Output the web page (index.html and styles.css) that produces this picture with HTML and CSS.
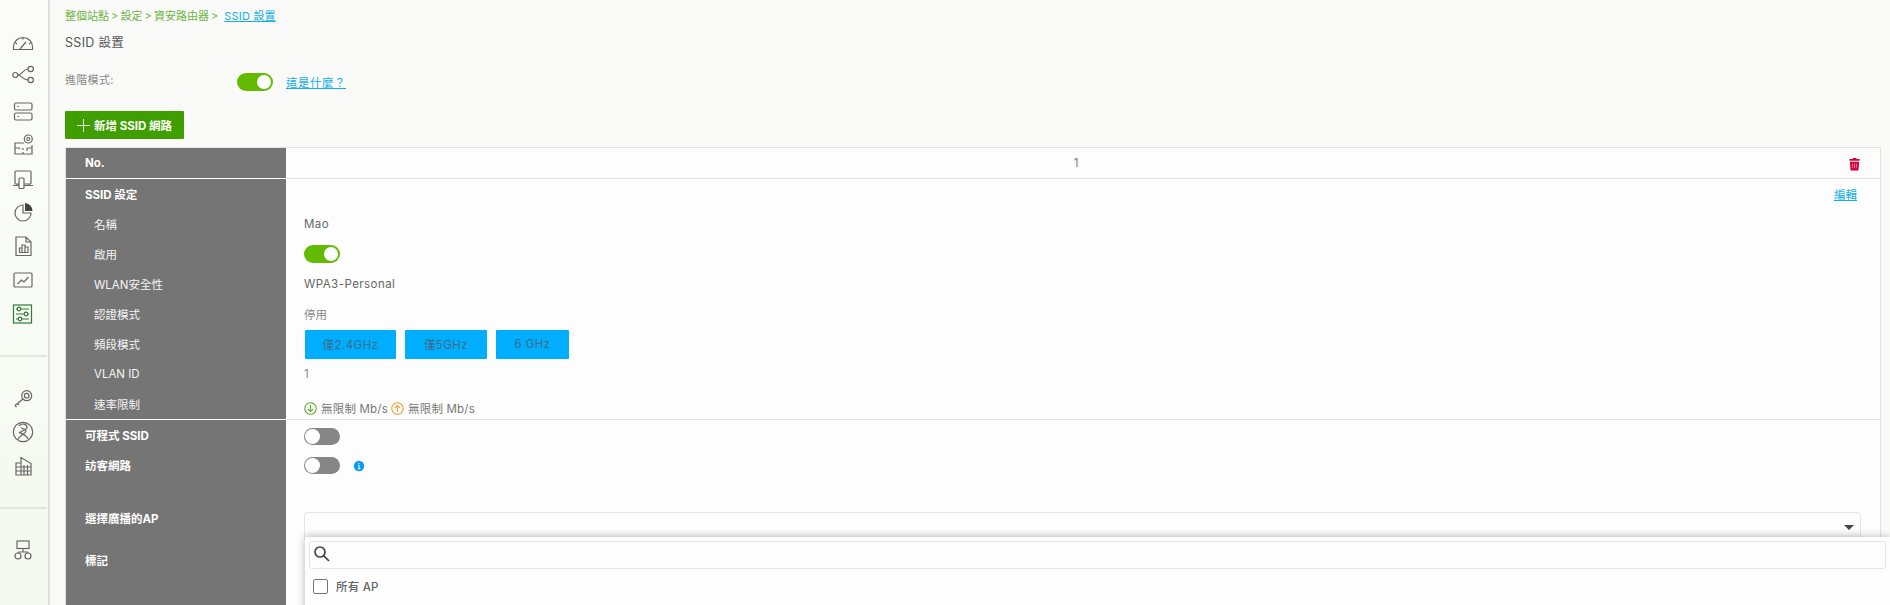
FILE: index.html
```html
<!DOCTYPE html>
<html lang="zh-Hant">
<head>
<meta charset="utf-8">
<title>SSID 設置</title>
<link rel="stylesheet" href="styles.css">
</head>
<body>
<div class="app">
  <nav class="sidebar">
    <svg class="ic" viewBox="0 0 28 28"><path d="M4.500 18.500V16a9.500 9.500 0 0 1 19 0v2.500zM11 18l6-7M14 6.500v2M6.500 12l1.500 1M21.500 12l-1.500 1"/></svg>
    <svg class="ic m2" viewBox="0 0 28 28"><circle cx="6.300" cy="14" r="2.500"/><circle cx="21.700" cy="8" r="2.700"/><circle cx="21.700" cy="19" r="2.700"/><path d="M8.800 14c4 0 4.500-5 10.200-6M8.800 14c4 0 4.500 4.500 10.200 5"/></svg>
    <svg class="ic m9" viewBox="0 0 28 28"><rect x="5.500" y="5" width="17.500" height="7" rx="1.500"/><rect x="5.500" y="15" width="17.500" height="7" rx="1.500"/><path d="M8.500 8.500h1.500M8.500 18.500h1.500"/></svg>
    <svg class="ic m7" viewBox="0 0 28 28"><path d="M15 10H6v11h17V12M6 15h4l1 1M14 15v2M18 15h5M14 19v2M18 15v3"/><circle cx="19.300" cy="6" r="4"/><circle cx="19.300" cy="6" r="1.500"/></svg>
    <svg class="ic m5" viewBox="0 0 28 28"><rect x="6" y="5" width="16" height="13" rx="1"/><path d="M4 19.500h6M15 19.500h9M8 18v1.500M20 18v1.500"/><rect x="10" y="12" width="5" height="10.500" rx="1" class="wash"/></svg>
    <svg class="ic m4" viewBox="0 0 28 28"><path d="M14 7a8 8 0 1 0 8 8h-8z"/><path class="solid" d="M16 5a8 8 0 0 1 7.500 8H16z"/></svg>
    <svg class="ic m6" viewBox="0 0 28 28"><path d="M7 5h10l5 5v13.500H7zM17 5v5h5M10.500 20v-4h2.500v4M13 20v-7h3v7M16 20v-5h3v5M10 20.500h9.500"/></svg>
    <svg class="ic m6" viewBox="0 0 28 28"><rect x="5" y="7" width="18" height="14" rx="1"/><path d="M8.500 18l4-4 2.500 2 4.500-5"/></svg>
    <svg class="ic m6 active" viewBox="0 0 28 28"><rect x="4.500" y="5" width="18" height="18"/><path d="M7 9h13M7 14h13M7 19h13"/><circle cx="10" cy="9" r="1.800" class="fillbg"/><circle cx="17" cy="14" r="1.800" class="fillbg"/><circle cx="11" cy="19" r="1.800" class="fillbg"/></svg>
    <hr class="rule">
    <svg class="ic" viewBox="0 0 28 28"><circle cx="17.700" cy="11.700" r="5"/><circle cx="17.700" cy="11.700" r="2.300"/><path d="M14 15l-8 6.500M8.500 19.500l1.500 1.500M6 21.500l1.500 1.500"/></svg>
    <svg class="ic m6" viewBox="0 0 28 28"><circle cx="14" cy="14" r="9.700"/><path d="M9 21.500c1-4 8-6 8-8.500 0-2-3.500-1.500-5-3.500M10 8c3-3.500 8-2 8 1.500 0 2-4 3-6.500 4.500M10 14c2 2 8 3 9 7"/></svg>
    <svg class="ic m7" viewBox="0 0 28 28"><path d="M12 10H7v12h15V10.500L12 4.500zM12 22V10M7 14h15M7 18h15M15 12v10M18.500 12v10"/></svg>
    <hr class="rule rule-low">
    <svg class="ic" viewBox="0 0 28 28"><rect x="8" y="5" width="12" height="7.500"/><path d="M14 12.500v3.500M9.500 17v-1h9v1"/><circle cx="9" cy="20" r="3"/><circle cx="19" cy="20" r="3"/></svg>
  </nav>

  <main class="main">
    <div class="crumbs">整個站點 &gt; 設定 &gt; 資安路由器 &gt;<a class="crumb-link" href="#">SSID 設置</a></div>
    <h1 class="title">SSID 設置</h1>
    <div class="mode">
      <span class="mode-label">進階模式:</span>
      <span class="toggle on"></span>
      <a class="link mode-link" href="#">這是什麼？</a>
    </div>
    <button class="add-btn"><span class="plus"></span>新增 SSID 網路</button>

    <section class="table">
      <div class="row row-no">
        <div class="lab strong">No.</div>
        <div class="val no-val"><span class="no-num">1</span>
          <svg class="trash" viewBox="0 0 14 14"><path d="M5 1.500V.5h4v1h3.500v2h-11v-2zM2 4.500h10L11.200 14H2.800z"/><path class="slots" d="M5 6.500v5M7 6.500v5M9 6.500v5"/></svg>
        </div>
      </div>
      <div class="row row-first">
        <div class="lab strong">SSID 設定</div>
        <div class="val val-end"><a class="link" href="#">編輯</a></div>
      </div>
      <div class="row"><div class="lab sub">名稱</div><div class="val wide">Mao</div></div>
      <div class="row"><div class="lab sub">啟用</div><div class="val"><span class="toggle on"></span></div></div>
      <div class="row"><div class="lab sub">WLAN安全性</div><div class="val wide">WPA3-Personal</div></div>
      <div class="row"><div class="lab sub">認證模式</div><div class="val muted">停用</div></div>
      <div class="row"><div class="lab sub">頻段模式</div>
        <div class="val bands wide">
          <span class="band b24">僅2.4GHz</span><span class="band b5">僅5GHz</span><span class="band b6">6 GHz</span>
        </div>
      </div>
      <div class="row"><div class="lab sub">VLAN ID</div><div class="val muted">1</div></div>
      <div class="row row-last"><div class="lab sub">速率限制</div>
        <div class="val rate">
          <svg class="arrow down" viewBox="0 0 12 12"><circle cx="6" cy="6" r="5.300"/><path d="M6 2.800v6M3.500 6.300L6 8.800l2.500-2.500"/></svg>
          <span class="rate-text">無限制 Mb/s</span>
          <svg class="arrow up" viewBox="0 0 12 12"><circle cx="6" cy="6" r="5.300"/><path d="M6 9.200v-6M3.500 5.700L6 3.200l2.500 2.500"/></svg>
          <span class="rate-text">無限制 Mb/s</span>
        </div>
      </div>
      <div class="row row-after"><div class="lab strong">可程式 SSID</div><div class="val"><span class="toggle off"></span></div></div>
      <div class="row"><div class="lab strong">訪客網路</div>
        <div class="val"><span class="toggle off"></span>
          <svg class="info" viewBox="0 0 12 12"><circle cx="6" cy="6" r="5.200"/><path d="M6 3v1.300M5 5.500h1.100v3.300M4.800 8.800h2.500"/></svg>
        </div>
      </div>
      <div class="row row-ap">
        <div class="lab strong lab-ap">選擇廣播的AP</div>
        <div class="val val-ap">
          <div class="select"><span class="caret"></span>
            <div class="drop">
              <div class="search">
                <svg class="mag" viewBox="0 0 18 18"><circle cx="7" cy="7" r="5"/><path d="M10.800 10.800L16 16"/></svg>
              </div>
              <label class="all"><span class="box"></span>所有 AP</label>
            </div>
          </div>
        </div>
      </div>
      <div class="row row-tag"><div class="lab strong">標記</div><div class="val"></div></div>
    </section>
  </main>
</div>
</body>
</html>
```
FILE: styles.css
```css
* { box-sizing: border-box; }
html, body { margin: 0; height: 100%; overflow: hidden; }
body {
  font-family: "Inter", "Noto Sans CJK TC", sans-serif;
  font-size: 11.5px;
  color: #666;
  background: #fafbf9;
}
a { color: inherit; }
.app { display: flex; height: 605px; }

/* sidebar */
.sidebar {
  width: 50px;
  flex: none;
  padding: 31px 0 0;
  border-right: 2px solid #dcdfda;
  background: linear-gradient(#fbfcfa, #f4faef);
  display: flex;
  flex-direction: column;
}
.ic {
  display: block;
  width: 28px;
  height: 28px;
  margin-left: 9px;
  flex: none;
  fill: none;
  stroke: #666;
  stroke-width: 1.2;
}
.m2 { margin-top: 2px; }
.m4 { margin-top: 4px; }
.m5 { margin-top: 5px; }
.m6 { margin-top: 6px; }
.m7 { margin-top: 7px; }
.m9 { margin-top: 9px; }
.solid { fill: #444; stroke: none; }
.wash { fill: #f8fbf6; }
.fillbg { fill: #f8fbf6; }
.active { stroke: #2e7d32; }
.rule {
  width: 47px;
  height: 2px;
  margin: 27px 0;
  border: 0;
  background: #e2e4df;
  flex: none;
}
.rule-low { margin-top: 26px; }

/* main */
.main { flex: 1; min-width: 0; padding: 8px 9px 0 15px; }
.crumbs { height: 15px; line-height: 15px; margin-top: 1px; font-size: 11px; color: #6cb33f; white-space: nowrap; word-spacing: -1px; }
.crumb-link { margin-left: 6px; color: #12aeea; text-decoration: underline; word-spacing: 0; letter-spacing: .2px; }
.title { margin: 11px 0 0; height: 16px; line-height: 16px; font-size: 12.500px; font-weight: 400; color: #555; letter-spacing: .3px; }
.mode { display: flex; align-items: center; height: 18px; margin-top: 22px; }
.mode-label { width: 172px; margin-top: -6px; font-size: 11px; color: #888; letter-spacing: .3px; }
.link { color: #12aeea; text-decoration: underline; }
.mode-link { margin-left: 13px; letter-spacing: .5px; }
.toggle {
  display: inline-block;
  position: relative;
  width: 36px;
  height: 18px;
  border-radius: 9px;
  vertical-align: middle;
}
.toggle::after {
  content: "";
  position: absolute;
  top: 2px;
  width: 14px;
  height: 14px;
  border-radius: 50%;
  background: #fff;
}
.toggle.on { background: #62bb00; }
.toggle.on::after { right: 2px; }
.toggle.off { background: #868686; height: 17px; }
.toggle.off::after { left: 1px; top: 1px; width: 15px; height: 15px; }

.add-btn {
  display: flex;
  align-items: center;
  width: 119px;
  height: 28px;
  margin-top: 20px;
  padding: 0 0 0 12px;
  border: 0;
  border-radius: 1px;
  background: #3f9f00;
  color: #fff;
  font: 700 11.500px "Inter", "Noto Sans CJK TC", sans-serif;
  white-space: nowrap;
}
.plus { position: relative; width: 13px; height: 13px; margin-right: 4px; flex: none; }
.plus::before, .plus::after { content: ""; position: absolute; background: #e8f4dc; }
.plus::before { left: 6px; top: 0; width: 1px; height: 13px; }
.plus::after { left: 0; top: 6px; width: 13px; height: 1px; }

/* table */
.table {
  margin-top: 8px;
  border: 1px solid #e2e2e2;
  border-bottom: 0;
  background: #fdfdfd;
}
.row { display: grid; grid-template-columns: 220px 1fr; min-height: 30px; }
.lab {
  display: flex;
  align-items: center;
  background: #757575;
  color: #fff;
  padding-left: 19px;
  white-space: nowrap;
}
.strong { font-weight: 700; }
.sub { padding-left: 28px; color: #f4f4f4; }
.val { display: flex; align-items: center; padding: 0 20px 0 18px; color: #666; }
.wide { letter-spacing: .45px; }
.muted { color: #888; }
.row-no { height: 31px; border-bottom: 1px solid #e2e2e2; }
.row-no .lab { border-bottom: 1px solid #fff; margin-bottom: -1px; }
.no-val { position: relative; justify-content: center; }
.no-num { margin-right: 12px; color: #777; }
.trash { position: absolute; right: 19px; top: 9px; width: 13px; height: 14px; fill: #d0003c; }
.slots { fill: none; stroke: #fff; stroke-width: .8; opacity: .6; }
.val-end { justify-content: flex-end; padding-right: 23px; }
.row-last { height: 31px; border-bottom: 1px solid #e2e2e2; }
.row-last .lab { border-bottom: 1px solid #fff; margin-bottom: -1px; padding-bottom: 1px; }
.bands { gap: 9px; padding-left: 19px; }
.band {
  display: flex;
  align-items: center;
  justify-content: center;
  height: 29px;
  border-radius: 1px;
  background: #00aeff;
  color: #3f6c86;
}
.b24 { width: 91px; }
.b5 { width: 82px; }
.b6 { width: 73px; }
.rate { padding-top: 8px; }
.rate-text { margin: 0 2px 0 4px; white-space: nowrap; color: #777; letter-spacing: .2px; }
.arrow { width: 13px; height: 13px; fill: none; stroke-width: 1; flex: none; }
.down { stroke: #5aa92a; }
.up { stroke: #f29a2e; margin-left: 1px; }
.row-after .val { align-items: flex-start; padding-top: 8px; }
.info { width: 12px; height: 12px; margin: 2px 0 0 13px; fill: #0a9bf5; stroke: #fff; stroke-width: 1; flex: none; }
.info circle { stroke: none; }

.row-ap { height: 66px; }
.lab-ap { align-items: flex-start; padding-top: 32px; line-height: 14px; }
.val-ap { align-items: flex-start; padding: 32px 19px 0 18px; }
.select {
  position: relative;
  width: 100%;
  height: 30px;
  border: 1px solid #e4e4e4;
  border-radius: 4px;
  background: linear-gradient(#fdfdfd 60%, #f1f1f1);
}
.caret {
  position: absolute;
  right: 6px;
  top: 12px;
  border: 5px solid transparent;
  border-top: 5px solid #444;
  border-bottom: 0;
}
.drop {
  position: absolute;
  left: 0;
  right: -30px;
  top: 24px;
  height: 90px;
  padding: 4px 4px 0 4px;
  background: #fdfdfd;
  box-shadow: 0 0 8px rgba(0, 0, 0, .28);
}
.search {
  height: 28px;
  padding-left: 3px;
  border: 1px solid #e4e4e4;
  border-radius: 3px;
  display: flex;
  align-items: center;
}
.mag { width: 18px; height: 18px; margin-top: -3px; fill: none; stroke: #444; stroke-width: 1.700; }
.all { display: flex; align-items: center; margin: 9px 0 0 4px; font-weight: 500; color: #666; letter-spacing: .2px; }
.box { width: 15px; height: 15px; margin-right: 8px; border: 1px solid #777; border-radius: 2px; background: #fff; }
.row-tag { height: 60px; }
.row-tag .lab { align-items: flex-start; line-height: 30px; }
```
